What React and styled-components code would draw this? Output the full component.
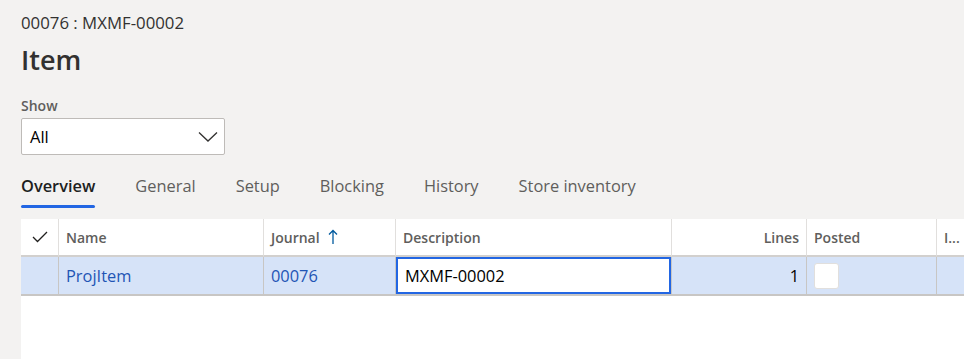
import React from "react";
import styled, { createGlobalStyle } from "styled-components";

const GlobalStyle = createGlobalStyle`
  html, body {
    margin: 0;
    padding: 0;
    background: #f3f2f1;
    font-family: "Open Sans", "Noto Sans", sans-serif;
    color: #323130;
  }
`;

const Page = styled.div`
  width: 964px;
  height: 359px;
  overflow: hidden;
  padding: 12px 0 0 21px;
  box-sizing: border-box;
  display: flex;
  flex-direction: column;
`;

const Caption = styled.div`
  font-size: 16.8px;
  line-height: 22px;
  color: #323130;
`;

const Title = styled.h1`
  margin: 8px 0 0;
  font-size: 27px;
  line-height: 36px;
  font-weight: 600;
  color: #323130;
`;

const FieldLabel = styled.label`
  display: block;
  margin-top: 18px;
  font-size: 14px;
  line-height: 19px;
  font-weight: 600;
  color: #605e5c;
`;

const Select = styled.div`
  margin-top: 3px;
  width: 204px;
  height: 37px;
  box-sizing: border-box;
  background: #fff;
  border: 1px solid #bebbb8;
  border-radius: 2px;
  display: flex;
  align-items: center;
  justify-content: space-between;
  padding: 0 6px 0 8px;
  font-size: 16.5px;
  color: #000;
`;

const Tabs = styled.div`
  display: flex;
  gap: 40px;
  margin-top: 19px;
  height: 34px;
`;

const Tab = styled.div`
  position: relative;
  font-size: 16.4px;
  line-height: 24px;
  color: ${(p) => (p.$active ? "#201f1e" : "#605e5c")};
  font-weight: ${(p) => (p.$active ? 600 : 400)};
  &::after {
    content: "";
    display: ${(p) => (p.$active ? "block" : "none")};
    position: absolute;
    left: 0;
    right: 0;
    top: 31px;
    height: 3px;
    border-radius: 2px;
    background: #2266e3;
  }
`;

const Grid = styled.div`
  margin-top: 11px;
  flex: 1;
  background: #fff;
  display: grid;
  grid-template-columns: 38px 205px 132px 276px 135px 130px 1fr;
  grid-auto-rows: max-content;
`;

const HeadCell = styled.div`
  height: 38px;
  box-sizing: border-box;
  border-right: 1px solid #e1dfdd;
  border-bottom: 2px solid #d2d0ce;
  display: flex;
  align-items: center;
  justify-content: ${(p) => (p.$right ? "flex-end" : p.$center ? "center" : "flex-start")};
  padding: 0 7px;
  font-size: 14px;
  font-weight: 600;
  color: #605e5c;
  gap: 8px;
  white-space: nowrap;
`;

const Cell = styled.div`
  height: 39px;
  box-sizing: border-box;
  background: #d6e3f8;
  border-right: 1px solid #c8c6c4;
  border-bottom: 2px solid #c8c6c4;
  display: flex;
  align-items: center;
  justify-content: ${(p) => (p.$right ? "flex-end" : "flex-start")};
  padding: 0 ${(p) => (p.$flush ? "0" : "7px")};
  font-size: 16.4px;
  color: ${(p) => (p.$link ? "#1f55b5" : "#000")};
`;

const EditBox = styled.div`
  width: 100%;
  height: 100%;
  box-sizing: border-box;
  background: #fff;
  border: 2px solid #2266e3;
  display: flex;
  align-items: center;
  padding: 0 7px;
  font-size: 16.4px;
  color: #000;
`;

const CheckBox = styled.div`
  width: 25px;
  height: 26px;
  box-sizing: border-box;
  background: #fff;
  border: 1px solid #e1dfdd;
  border-radius: 3px;
`;

const Chevron = () => (
  <svg width="20" height="12" viewBox="0 0 20 12">
    <path d="M1 1.5 L10 10 L19 1.5" fill="none" stroke="#323130" strokeWidth="1.3" />
  </svg>
);

const Check = () => (
  <svg width="16" height="12" viewBox="0 0 16 12">
    <path d="M1 6 L5.5 10.5 L15 1" fill="none" stroke="#201f1e" strokeWidth="1.3" />
  </svg>
);

const SortUp = () => (
  <svg width="10" height="16" viewBox="0 0 10 16">
    <path d="M5 15 V1.5 M1 5.5 L5 1.5 L9 5.5" fill="none" stroke="#005a9e" strokeWidth="1.3" />
  </svg>
);

const tabs = ["Overview", "General", "Setup", "Blocking", "History", "Store inventory"];

export default function App() {
  return (
    <>
      <GlobalStyle />
      <Page>
        <Caption>00076 : MXMF-00002</Caption>
        <Title>Item</Title>
        <FieldLabel>Show</FieldLabel>
        <Select>
          <span>All</span>
          <Chevron />
        </Select>
        <Tabs>
          {tabs.map((t, i) => (
            <Tab key={t} $active={i === 0}>
              {t}
            </Tab>
          ))}
        </Tabs>
        <Grid>
          <HeadCell $center>
            <Check />
          </HeadCell>
          <HeadCell>Name</HeadCell>
          <HeadCell>
            Journal <SortUp />
          </HeadCell>
          <HeadCell>Description</HeadCell>
          <HeadCell $right>Lines</HeadCell>
          <HeadCell>Posted</HeadCell>
          <HeadCell>I...</HeadCell>

          <Cell />
          <Cell $link>ProjItem</Cell>
          <Cell $link>00076</Cell>
          <Cell $flush>
            <EditBox>MXMF-00002</EditBox>
          </Cell>
          <Cell $right>1</Cell>
          <Cell>
            <CheckBox />
          </Cell>
          <Cell />
        </Grid>
      </Page>
    </>
  );
}
